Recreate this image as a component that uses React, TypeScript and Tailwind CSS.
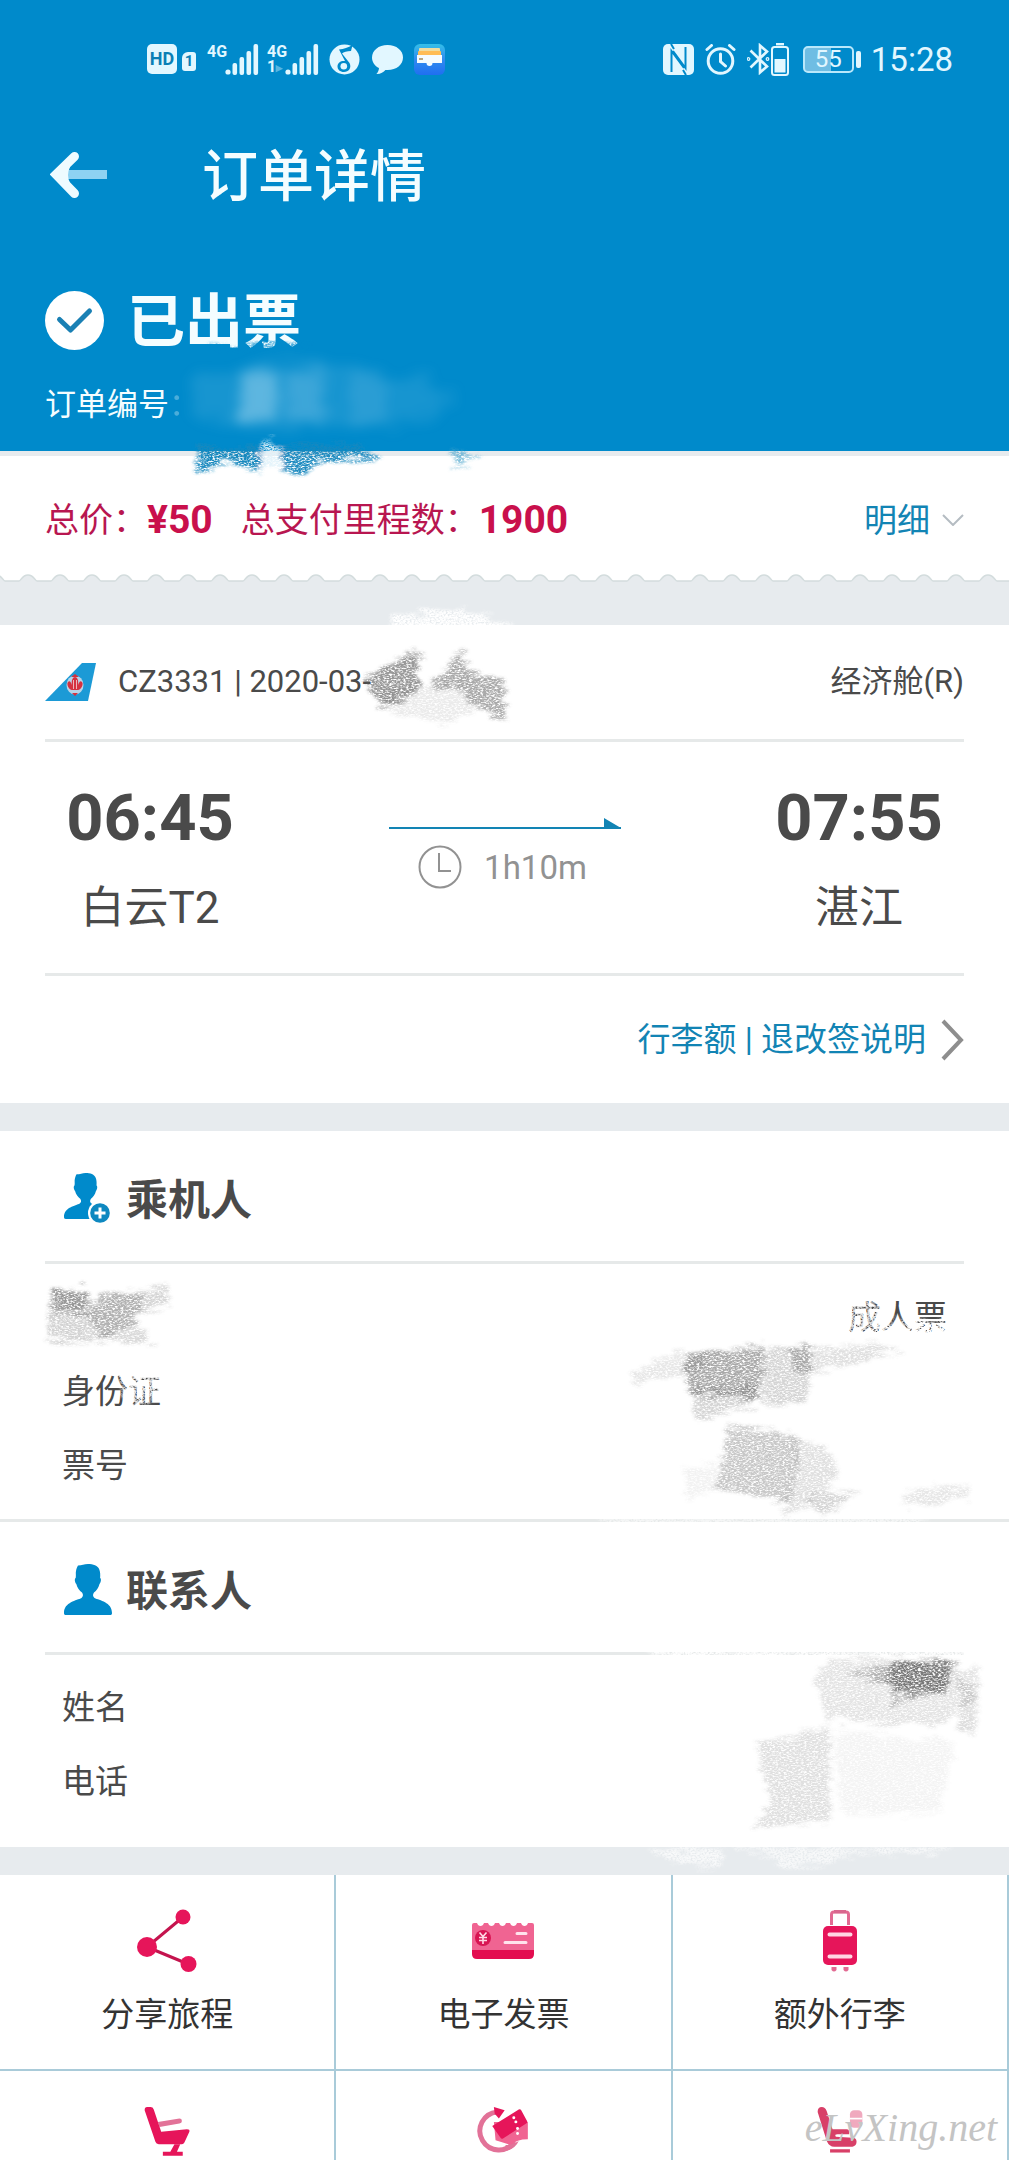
import type { ReactNode } from "react";

type StrokeShape = { points: string; opacity: number; color?: string };

/* Chalk-like smudges that hide private data. */
function Smudge({
  id,
  width,
  height,
  shapes,
  className,
  fine = false,
}: {
  id: string;
  width: number;
  height: number;
  shapes: StrokeShape[];
  className: string;
  fine?: boolean;
}) {
  return (
    <svg
      aria-hidden="true"
      width={width}
      height={height}
      viewBox={`0 0 ${width} ${height}`}
      className={`pointer-events-none absolute overflow-visible ${className}`}
    >
      <defs>
        <filter id={id} x="-10%" y="-15%" width="120%" height="130%">
          <feTurbulence type="fractalNoise" baseFrequency="0.04 0.3" numOctaves="2" seed="4" result="edge" />
          <feDisplacementMap in="SourceGraphic" in2="edge" scale="22" xChannelSelector="R" yChannelSelector="G" result="rough" />
          <feGaussianBlur in="rough" stdDeviation="1.5" result="soft" />
          <feTurbulence type="fractalNoise" baseFrequency={fine ? "0.5 0.6" : "0.35 0.8"} numOctaves="3" seed="9" result="grain" />
          <feColorMatrix in="grain" type="matrix" values="0 0 0 0 0  0 0 0 0 0  0 0 0 0 0  3.2 0 0 0 -0.85" result="mask" />
          <feComposite in="soft" in2="mask" operator="in" />
        </filter>
      </defs>
      <g filter={`url(#${id})`}>
        {shapes.map((s, i) => (
          <polygon key={i} points={s.points} fill={s.color ?? "#555"} opacity={s.opacity} />
        ))}
      </g>
    </svg>
  );
}

function SignalBars() {
  return (
    <svg width="34" height="31" viewBox="0 0 34 31" fill="#e2f7ff" aria-hidden="true">
      <circle cx="3" cy="28" r="2.6" />
      <rect x="7.5" y="19" width="4.6" height="12" rx="2" />
      <rect x="14.5" y="13" width="4.6" height="18" rx="2" />
      <rect x="21.5" y="7" width="4.6" height="24" rx="2" />
      <rect x="28.5" y="0" width="4.6" height="31" rx="2" />
    </svg>
  );
}

function StatusBar() {
  return (
    <div className="flex h-[118px] items-center justify-between pl-[147px] pr-[56px] text-[#e2f7ff]">
      <div className="flex items-center">
        <span className="flex h-[30px] w-[30px] items-center justify-center rounded-[5px] bg-[#e2f7ff] text-[18px] font-bold leading-none text-[#0a7fb5]">
          HD
        </span>
        <span className="ml-[5px] mt-[5px] flex h-[19px] w-[14px] items-center justify-center rounded-[3px] rounded-tl-[6px] bg-[#e2f7ff] text-[15px] font-bold leading-none text-[#0a7fb5]">
          1
        </span>
        <span className="ml-[11px] h-[31px] w-[18px] text-[16px] font-bold leading-[15px]">4G</span>
        <SignalBars />
        <span className="ml-[8px] flex h-[31px] w-[18px] flex-col text-[16px] font-bold leading-[15px]">
          <span>4G</span>
          <span>
            1<span className="text-[13px] opacity-40">▸</span>
          </span>
        </span>
        <SignalBars />
        <svg className="ml-[10px]" width="31" height="31" viewBox="0 0 31 31" aria-hidden="true">
          <circle cx="15.5" cy="15.5" r="15" fill="#e2f7ff" />
          <path d="M10 5.5C15 5 19 3.500 23.500 1L22 7C18 7 14.500 8 13 9.500L20.500 19c2.500 5-1 9-5.500 9-4 0-6.500-2.500-6.500-5.500 0-4 3.500-6 7.500-5.500Z" fill="#008acb" />
          <circle cx="14.800" cy="22.300" r="3.300" fill="#e2f7ff" />
        </svg>
        <svg className="ml-[11px]" width="33" height="31" viewBox="0 0 33 31" fill="#e2f7ff" aria-hidden="true">
          <path d="M16.500 1C7.500 1 1 6.500 1 13.500c0 4.500 2.800 8.400 7 10.600-.2 2.300-1 4.400-2.600 5.900 4 .2 7.200-1.700 9-4h2.100C25.500 26 32 20.500 32 13.500S25.500 1 16.500 1Z" />
        </svg>
        <svg className="ml-[10px]" width="31" height="31" viewBox="0 0 31 31" aria-hidden="true">
          <defs>
            <linearGradient id="wallet" x1="0" y1="0" x2="0" y2="1">
              <stop offset="0" stopColor="#35bfe8" />
              <stop offset=".5" stopColor="#2f8bf0" />
              <stop offset="1" stopColor="#1f6ff0" />
            </linearGradient>
          </defs>
          <rect width="31" height="31" rx="6" fill="url(#wallet)" />
          <rect x="5" y="4" width="21" height="6" rx="1" fill="#f0dca0" />
          <rect x="4" y="7" width="23" height="6" rx="1" fill="#ffbc55" />
          <path d="M3 11h25v8h-9.500a3 3 0 0 1-6 0H3Z" fill="#f4fbff" />
          <path d="M5 15h4" stroke="#b8a680" strokeWidth="2" />
        </svg>
      </div>

      <div className="flex items-center">
        <svg width="31" height="31" viewBox="0 0 31 31" aria-hidden="true">
          <rect width="31" height="31" rx="5" fill="#e2f7ff" />
          <path d="M8.500 28V7l12.500 17M22.500 3v21L10 7" fill="none" stroke="#008acb" strokeWidth="2" />
          <path d="M8 0l3 5M20 26l3 5" stroke="#008acb" strokeWidth="2" />
        </svg>
        <svg className="ml-[11px]" width="31" height="31" viewBox="0 0 31 31" fill="none" stroke="#e2f7ff" strokeWidth="3" strokeLinecap="round" aria-hidden="true">
          <circle cx="15.500" cy="17" r="12.300" />
          <path d="M15.500 10v7.500l5 4.500M2 5.500l4.500-4M29 5.500l-4.500-4" />
        </svg>
        <svg className="ml-[11px]" width="23" height="32" viewBox="0 0 23 32" fill="none" stroke="#e2f7ff" strokeWidth="2.600" aria-hidden="true">
          <path d="M3.500 7.500 20 23.500l-7 6V2.500l7 6L3.500 24.500" />
          <circle cx="1.500" cy="16" r=".6" />
          <circle cx="20.500" cy="16" r=".6" />
        </svg>
        <svg className="ml-px" width="18" height="33" viewBox="0 0 18 33" fill="none" aria-hidden="true">
          <rect x="1" y="4" width="16" height="28" rx="2.500" stroke="#e2f7ff" strokeWidth="2" />
          <rect x="5" y="0" width="8" height="2.400" fill="#e2f7ff" />
          <rect x="3.500" y="16" width="11" height="13.500" fill="#e2f7ff" />
        </svg>
        <span className="ml-[14px] flex h-[27px] w-[51px] items-center justify-center rounded-[5px] border-2 border-[#b9e8fb] bg-linear-to-r from-[#6fbde3] from-55% to-transparent to-55% text-[24px] leading-none">
          55
        </span>
        <span className="ml-[2px] h-[17px] w-[5px] rounded-[2px] bg-[#e2f7ff]" />
        <span className="ml-[10px] text-[33px] leading-none">15:28</span>
      </div>
    </div>
  );
}

function Header() {
  return (
    <header className="relative bg-[#008acb] text-[#f4fdff]">
      <StatusBar />
      <div className="flex h-[114px] items-center pl-[50px]">
        <button type="button" aria-label="返回" className="flex">
          <svg width="57" height="48" viewBox="0 0 57 48" fill="none" aria-hidden="true">
            <path d="M18 23.500h39" stroke="#8ed2f2" strokeWidth="9" />
            <path d="M24.500 5.500 6 23.500 24.500 42.500" stroke="#eefbff" strokeWidth="9" strokeLinecap="round" strokeLinejoin="miter" />
            <path d="M10 16h10q-4 8 0 16H10Z" fill="#eefbff" />
          </svg>
        </button>
        <h1 className="ml-[95px] pt-1 text-[56px] font-medium leading-none">订单详情</h1>
      </div>
      <div className="mt-[46px] flex h-[84px] items-center pl-[45px]">
        <svg width="59" height="59" viewBox="0 0 59 59" aria-hidden="true">
          <circle cx="29.500" cy="29.500" r="29.500" fill="#fff" />
          <path d="M14.500 28.500 25.500 39 44.500 20" fill="none" stroke="#1a80b4" strokeWidth="5" strokeLinecap="round" strokeLinejoin="round" />
        </svg>
        <p className="ml-[23px] pt-1 text-[58px] font-bold leading-none">已出票</p>
      </div>
      <p className="flex h-[82px] items-center pl-[45px] pt-[2px] text-[31px] leading-none">
        订单编号<span className="opacity-30">：</span>
      </p>
      <div className="h-[7px]" />
      <Smudge
        id="smudge-title"
        width={110}
        height={16}
        className="left-[200px] top-[338px]"
        fine
        shapes={[{ points: "8,8 60,4 105,4 108,12 20,14", opacity: 0.75, color: "#008acb" }]}
      />
      <svg width="300" height="100" viewBox="0 0 300 100" className="pointer-events-none absolute left-[180px] top-[350px]" aria-hidden="true">
        <defs>
          <filter id="cloud" x="-20%" y="-30%" width="140%" height="160%">
            <feTurbulence type="fractalNoise" baseFrequency="0.03 0.2" numOctaves="2" seed="3" result="n" />
            <feDisplacementMap in="SourceGraphic" in2="n" scale="30" xChannelSelector="R" yChannelSelector="G" />
            <feGaussianBlur stdDeviation="6" />
          </filter>
        </defs>
        <g filter="url(#cloud)" fill="#8ccbea">
          <polygon points="16,26 120,10 240,28 280,50 220,76 60,80 12,60" opacity=".16" />
          <rect x="60" y="22" width="38" height="50" opacity=".6" />
          <rect x="105" y="18" width="40" height="54" opacity=".32" />
          <rect x="170" y="24" width="36" height="48" opacity=".16" />
        </g>
      </svg>
      <Smudge
        id="smudge-edge"
        width={290}
        height={40}
        className="left-[190px] top-[440px]"
        shapes={[
          { points: "4,6 72,6 72,32 40,22 6,32", opacity: 1, color: "#1688be" },
          { points: "88,6 165,4 190,20 130,22 116,34 90,32", opacity: 0.95, color: "#1688be" },
          { points: "262,12 294,12 264,30", opacity: 0.7, color: "#4ba5cd" },
          { points: "70,2 88,0 90,26 72,28", opacity: 0.9, color: "#e2f3fb" },
        ]}
      />
    </header>
  );
}

function PriceBar() {
  return (
    <section className="bg-white">
      <div className="h-[5px] bg-[#e7ebee]" />
      <div className="flex h-[118px] items-center justify-between px-[45px] pt-[10px] text-[34px] leading-none">
        <p className="flex items-center text-[#b81650]">
          总价：<strong className="text-[39px] text-[#c9104c]">¥50</strong>
          <span className="ml-[28px]">总支付里程数：</span>
          <strong className="text-[39px] text-[#c9104c]">1900</strong>
        </p>
        <button type="button" className="flex items-center text-[33px] text-[#1284b4]">
          明细
          <svg className="ml-[12px]" width="22" height="12" viewBox="0 0 22 12" fill="none" stroke="#b5bcc2" strokeWidth="2" aria-hidden="true">
            <path d="M1 1l10 10L21 1" />
          </svg>
        </button>
      </div>
      <svg className="block h-[8px] w-full" aria-hidden="true">
        <defs>
          <pattern id="scallop" width="32" height="8" patternUnits="userSpaceOnUse" x="12">
            <path d="M0 7h7c2 0 3-6 9-6s7 6 9 6h7v1H0Z" fill="#e7ebee" />
            <path d="M0 7h7c2 0 3-6 9-6s7 6 9 6h7" fill="none" stroke="#d3dcdd" strokeWidth="1.500" />
          </pattern>
        </defs>
        <rect width="100%" height="8" fill="url(#scallop)" />
      </svg>
    </section>
  );
}

function TailLogo() {
  return (
    <svg width="51" height="38" viewBox="0 0 51 38" aria-hidden="true">
      <path d="M37 0h14L43 38H0Z" fill="#1c9ad6" />
      <ellipse cx="30" cy="22" rx="8.500" ry="9.500" fill="#b9d4e8" />
      <path d="M23 19c2-2 3 1 4 3-1-5 1-8 3-8s4 3 3 8c1-2 2-5 4-3s-1 8-4 8h-6c-3 0-6-6-4-8Z" fill="#d5313f" />
      <path d="M27 30h6l-3 3ZM26 14l4-3 4 3Z" fill="#d5313f" />
      <path d="M28.500 17v9M31.500 17v9" stroke="#f3d5da" strokeWidth=".8" />
    </svg>
  );
}

function Endpoint({ time, place }: { time: string; place: string }) {
  return (
    <div className="flex w-[210px] flex-col items-center text-[#4a4a4a]">
      <strong className="text-[65px] leading-[76px]">{time}</strong>
      <span className="mt-[24px] text-[44px] leading-[56px]">{place}</span>
    </div>
  );
}

function FlightCard() {
  return (
    <section className="relative bg-white px-[45px]">
      <div className="flex h-[117px] items-center justify-between border-b-[3px] border-[#e6e9e9] pb-px leading-none text-[#4a4a4a]">
        <div className="flex items-center">
          <TailLogo />
          <span className="ml-[22px] text-[31px]">CZ3331 | 2020-03-</span>
        </div>
        <span className="text-[31px]">经济舱(R)</span>
      </div>
      <div className="flex h-[234px] justify-between border-b-[3px] border-[#e6e9e9] pt-[38px]">
        <Endpoint time="06:45" place="白云T2" />
        <div className="flex flex-col items-center pt-[38px]">
          <svg width="232" height="11" viewBox="0 0 232 11" aria-hidden="true">
            <path d="M0 9h232v2H0ZM215 0l17 10h-17Z" fill="#1284b4" />
          </svg>
          <div className="mt-[16px] flex items-center pr-1 text-[33px] leading-none text-[#929292]">
            <svg width="44" height="44" viewBox="0 0 44 44" fill="none" stroke="#929292" strokeWidth="2" aria-hidden="true">
              <circle cx="22" cy="22" r="20.500" />
              <path d="M21 8v18h12" />
            </svg>
            <span className="ml-[22px]">1h10m</span>
          </div>
        </div>
        <Endpoint time="07:55" place="湛江" />
      </div>
      <div className="flex h-[127px] items-center justify-end">
        <a href="#rules" className="flex items-center text-[33px] leading-none text-[#1284b4]">
          行李额&nbsp;|&nbsp;退改签说明
          <svg className="ml-[15px]" width="23" height="42" viewBox="0 0 23 42" fill="none" stroke="#8e8e8e" strokeWidth="4" aria-hidden="true">
            <path d="M2 2l18 19L2 40" />
          </svg>
        </a>
      </div>
      <Smudge
        id="smudge-card-top"
        width={140}
        height={30}
        className="left-[384px] top-[-16px]"
        fine
        shapes={[{ points: "4,10 40,2 84,0 118,12 140,28 4,28", opacity: 1, color: "#fff" }]}
      />
      <Smudge
        id="smudge-date"
        width={160}
        height={90}
        className="left-[358px] top-[22px]"
        shapes={[
          { points: "4,32 50,4 62,8 62,44 24,60", opacity: 0.6 },
          { points: "68,40 104,2 112,26 146,34 148,72 118,60 104,42", opacity: 0.5 },
          { points: "24,46 110,36 120,62 86,76 30,66", opacity: 0.12 },
        ]}
      />
    </section>
  );
}

const BUST =
  "M24 0c-4 0-6 1.500-10 1.500-1 1.500-1.500 3-2 5.500-.5 2 .2 4-.3 7-1.200.5-1.200 4 .6 6 1 4 3.200 6.500 5.700 8.500 1.500 2 1.200 4-.5 5.500C13 36.500 0 38 0 49c0 1.500.5 2 2 2h44c1.500 0 2-.5 2-2 0-11-12.500-12.500-17.500-15-1.700-1.500-2-3.500-.5-5.500 2.500-2 4.500-4.500 5.500-8.500 1.800-2 1.800-5.500.6-6 .3-3 .2-6-.8-8.500C34 1.500 29 0 24 0Z";

function PersonIcon({ plus = false }: { plus?: boolean }) {
  return (
    <svg width="48" height="51" viewBox="0 0 48 51" className="overflow-visible" aria-hidden="true">
      {plus ? (
        <>
          <path d={BUST} fill="#008acb" transform="scale(.9)" />
          <circle cx="36" cy="40" r="12" fill="#fff" />
          <circle cx="36" cy="40" r="9.800" fill="#0e88c0" />
          <path d="M36 34.500v11M30.500 40h11" stroke="#fff" strokeWidth="3" />
        </>
      ) : (
        <path d={BUST} fill="#008acb" />
      )}
    </svg>
  );
}

function SectionTitle({ plus, children }: { plus?: boolean; children: ReactNode }) {
  return (
    <div className="mx-[45px] flex h-[133px] items-center border-b-[3px] border-[#e6e9e9] pl-[19px] pt-1">
      <PersonIcon plus={plus} />
      <h2 className="ml-[14px] pt-[6px] text-[42px] font-bold leading-none text-[#4a4a4a]">{children}</h2>
    </div>
  );
}

function Row({ label, value }: { label?: string; value?: string }) {
  return (
    <div className="flex h-[74px] items-center justify-between pl-[62px] pr-[62px] text-[33px] leading-none text-[#4a4a4a]">
      <span>{label}</span>
      <span>{value}</span>
    </div>
  );
}

function Passenger() {
  return (
    <section className="relative bg-white">
      <SectionTitle plus>乘机人</SectionTitle>
      <div className="border-b-[3px] border-[#e6e9e9] pb-[17px] pt-[16px]">
        <Row value="成人票" />
        <Row label="身份证" />
        <Row label="票号" />
      </div>
      <Smudge
        id="smudge-name"
        width={130}
        height={70}
        className="left-[44px] top-[152px]"
        shapes={[
          { points: "4,10 42,4 44,30 6,26", opacity: 0.6 },
          { points: "4,24 50,28 48,60 4,58", opacity: 0.26 },
          { points: "44,24 70,8 96,14 92,40 54,58", opacity: 0.45 },
          { points: "90,8 124,4 124,24 94,32", opacity: 0.25 },
          { points: "56,54 92,40 110,58 90,62", opacity: 0.22 },
        ]}
      />
      <Smudge
        id="smudge-type"
        width={130}
        height={44}
        className="left-[840px] top-[168px]"
        fine
        shapes={[
          { points: "4,2 40,2 44,44 4,44", opacity: 0.8, color: "#fff" },
          { points: "34,22 124,20 124,44 30,44", opacity: 1, color: "#fff" },
        ]}
      />
      <Smudge
        id="smudge-id-label"
        width={60}
        height={40}
        className="left-[110px] top-[240px]"
        fine
        shapes={[{ points: "2,0 60,0 58,24 22,36 10,18", opacity: 0.85, color: "#fff" }]}
      />
      <Smudge
        id="smudge-id"
        width={360}
        height={190}
        className="left-[620px] top-[208px]"
        shapes={[
          { points: "10,34 60,14 86,14 78,32 16,46", opacity: 0.14 },
          { points: "68,16 142,6 144,34 138,58 70,56 66,40", opacity: 0.5 },
          { points: "72,52 140,46 138,64 74,82", opacity: 0.25 },
          { points: "142,12 190,6 190,32 186,64 144,66", opacity: 0.24 },
          { points: "172,8 190,6 190,34 172,32", opacity: 0.36 },
          { points: "190,10 244,4 280,10 226,28 192,34", opacity: 0.18 },
          { points: "108,86 180,98 172,162 96,150 104,116", opacity: 0.32 },
          { points: "176,100 210,110 218,140 164,182 172,150", opacity: 0.18 },
          { points: "182,162 206,152 240,156 202,176", opacity: 0.24 },
          { points: "286,150 350,146 348,160 282,168", opacity: 0.14 },
          { points: "62,130 98,124 100,148 70,160", opacity: 0.08 },
        ]}
      />
      <Smudge
        id="smudge-rule"
        width={330}
        height={10}
        className="left-[594px] top-[384px]"
        fine
        shapes={[{ points: "4,0 330,0 330,12 4,12", opacity: 0.6, color: "#fff" }]}
      />
    </section>
  );
}

function Contact() {
  return (
    <section className="relative bg-white">
      <SectionTitle>联系人</SectionTitle>
      <div className="pb-[29px] pt-[15px]">
        <Row label="姓名" />
        <Row label="电话" />
      </div>
      <Smudge
        id="smudge-line"
        width={330}
        height={10}
        className="left-[646px] top-[127px]"
        fine
        shapes={[{ points: "4,0 330,0 330,12 4,12", opacity: 0.95, color: "#fff" }]}
      />
      <Smudge
        id="smudge-contact"
        width={240}
        height={180}
        className="left-[750px] top-[132px]"
        shapes={[
          { points: "78,6 140,4 226,14 230,40 190,72 76,66 66,24", opacity: 0.16 },
          { points: "96,18 144,10 206,8 196,40 142,34", opacity: 0.36 },
          { points: "138,8 200,6 196,38 140,38", opacity: 0.6 },
          { points: "142,42 184,40 144,52", opacity: 0.4 },
          { points: "206,18 228,40 226,80 208,76 212,50", opacity: 0.2 },
          { points: "8,90 80,72 80,168 4,174 20,150", opacity: 0.18 },
          { points: "84,78 206,88 188,158 92,160", opacity: 0.07 },
        ]}
      />
    </section>
  );
}

function ShareIcon() {
  return (
    <svg width="62" height="64" viewBox="0 0 62 64" aria-hidden="true">
      <path d="M11 38 47 8M11 38l41 17" stroke="#c4144e" strokeWidth="3" />
      <circle cx="11" cy="38" r="10" fill="#e6155a" />
      <circle cx="47" cy="8" r="7.500" fill="#e6155a" />
      <circle cx="52.500" cy="55" r="8" fill="#e6155a" />
    </svg>
  );
}

function InvoiceIcon() {
  return (
    <svg width="62" height="36" viewBox="0 0 62 36" aria-hidden="true">
      <path d="M0 27V2Q0 0 2 0h3q1 3 3.500 3T12 0h4q1 3 3.500 3T23 0h4q1 3 3.500 3T34 0h4q1 3 3.500 3T45 0h4q1 3 3.500 3T56 0h4q2 0 2 2v25Z" fill="#f06492" />
      <path d="M0 27h62v4q0 5-5 5H5q-5 0-5-5Z" fill="#e30d50" />
      <circle cx="11" cy="15" r="8" fill="#d81553" />
      <path d="M7.500 9.500 11 13.500l3.500-4M11 13.500V21M7 14.500h8M7 17.500h8" fill="none" stroke="#ffd9e5" strokeWidth="1.600" />
      <path d="M45 10.500h9M33 19.500h21" stroke="#ffe3ec" strokeWidth="3" strokeLinecap="round" />
    </svg>
  );
}

function LuggageIcon() {
  return (
    <svg width="34" height="62" viewBox="0 0 34 62" aria-hidden="true">
      <path d="M8.500 15V4.500Q8.500 2 11 2h12q2.500 0 2.500 2.500V15" fill="none" stroke="#e26a92" strokeWidth="3" />
      <path d="M11 1.500h12" stroke="#d9688e" strokeWidth="3.500" />
      <rect y="16" width="34" height="39" rx="5" fill="#e6155a" />
      <path d="M6.500 24.500h21M6.500 46.500h21" stroke="#ffd6e3" strokeWidth="4" strokeLinecap="round" />
      <path d="M8.500 57h5v3q-2.500 3-5 0ZM20.500 57h5v3q-2.500 3-5 0Z" fill="#e26a92" />
    </svg>
  );
}

function SeatIcon() {
  return (
    <svg width="54" height="64" viewBox="0 0 54 64" aria-hidden="true">
      <path d="M16 18l26-4q3 0 3 3t-3 3l-24 4Z" fill="#e27298" />
      <path d="M0 4Q0 0 3 0h4q3 0 4 3l9 27 31-3q4 0 3 3l-6 13q-1 2-3 2H17q-3 0-4-3Z" fill="#e6155a" />
      <path d="M36 45h7l-4 9H31ZM22 54h24v5H22Z" fill="#e6155a" />
    </svg>
  );
}

function RefundIcon() {
  return (
    <svg width="62" height="64" viewBox="0 0 62 64" aria-hidden="true">
      <path d="M24 6A23 23 0 1 0 45 42" fill="none" stroke="#e27298" strokeWidth="6" />
      <path d="M20 0 33 4 26 14 21 8Z" fill="#e6155a" />
      <path d="M20 18h41v21q-14 0-20 7L22 40Z" fill="#f06492" />
      <path d="M18 23 50 3q2-1 3 1l7 13q1 2-1 3L31 38q-2 1-3-1Z" fill="#e6155a" />
      <path d="M44 13h.1M46.500 18h.1M48.500 32h.1M48.500 26h.1" stroke="#fff" strokeWidth="3.500" strokeLinecap="round" />
      <path d="M34 46q9 0 16-5-4 9-15 12Z" fill="#e27298" />
    </svg>
  );
}

function ComfortSeatIcon() {
  return (
    <svg width="54" height="64" viewBox="0 0 54 64" aria-hidden="true">
      <rect x="39" y="4" width="15" height="21" rx="5" fill="#f0a9be" />
      <path d="M39 14h15" stroke="#fff" strokeWidth="2" />
      <path d="M0 6Q0 0 5 0q4 0 6 5l7 22h17q4 0 3 6H24q-4 0-2 3l20 1q5 0 5 5t-5 6H20q-6 0-9-7Z" fill="#d84068" />
      <path d="M15 51h24v4H15Z" fill="#d84068" />
    </svg>
  );
}

const SERVICES: { label: string; icon: ReactNode }[] = [
  { label: "分享旅程", icon: <ShareIcon /> },
  { label: "电子发票", icon: <InvoiceIcon /> },
  { label: "额外行李", icon: <LuggageIcon /> },
];

const MORE: { name: string; icon: ReactNode }[] = [
  { name: "选座", icon: <SeatIcon /> },
  { name: "退改", icon: <RefundIcon /> },
  { name: "升舱", icon: <ComfortSeatIcon /> },
];

function Services() {
  return (
    <nav className="grid min-h-0 flex-1 grid-cols-3 grid-rows-[196px_1fr] bg-white">
      {SERVICES.map((s) => (
        <button
          key={s.label}
          type="button"
          className="flex flex-col items-center border-b-2 border-r-2 border-[#a9cbd9] pt-[34px] text-[33px] leading-none text-[#333]"
        >
          <span className="flex h-[64px] items-center">{s.icon}</span>
          <span className="mt-[25px]">{s.label}</span>
        </button>
      ))}
      {MORE.map((s) => (
        <button
          key={s.name}
          type="button"
          aria-label={s.name}
          className="flex flex-col items-center overflow-hidden border-r-2 border-[#a9cbd9] pt-[36px]"
        >
          {s.icon}
        </button>
      ))}
    </nav>
  );
}

export default function App() {
  return (
    <main className="relative flex h-screen flex-col overflow-hidden bg-[#e7ebee] font-['Roboto','Noto_Sans_CJK_SC',sans-serif] *:shrink-0">
      <div className="relative z-10">
        <Header />
      </div>
      <PriceBar />
      <div className="h-[43px]" />
      <FlightCard />
      <div className="h-[28px]" />
      <Passenger />
      <Contact />
      <div className="relative h-[28px]">
        <Smudge
          id="smudge-gap"
          width={330}
          height={26}
          className="left-[645px] top-0"
          fine
          shapes={[
            { points: "4,2 80,2 76,22 6,10", opacity: 0.7, color: "#fff" },
            { points: "80,0 310,0 290,8 220,4 160,22 134,20 124,8", opacity: 0.65, color: "#fff" },
          ]}
        />
      </div>
      <Services />
      <span className="absolute bottom-[12px] right-[12px] font-['Liberation_Serif',serif] text-[40px] italic leading-none text-[#c4c4c4]">
        eLvXing.net
      </span>
    </main>
  );
}
